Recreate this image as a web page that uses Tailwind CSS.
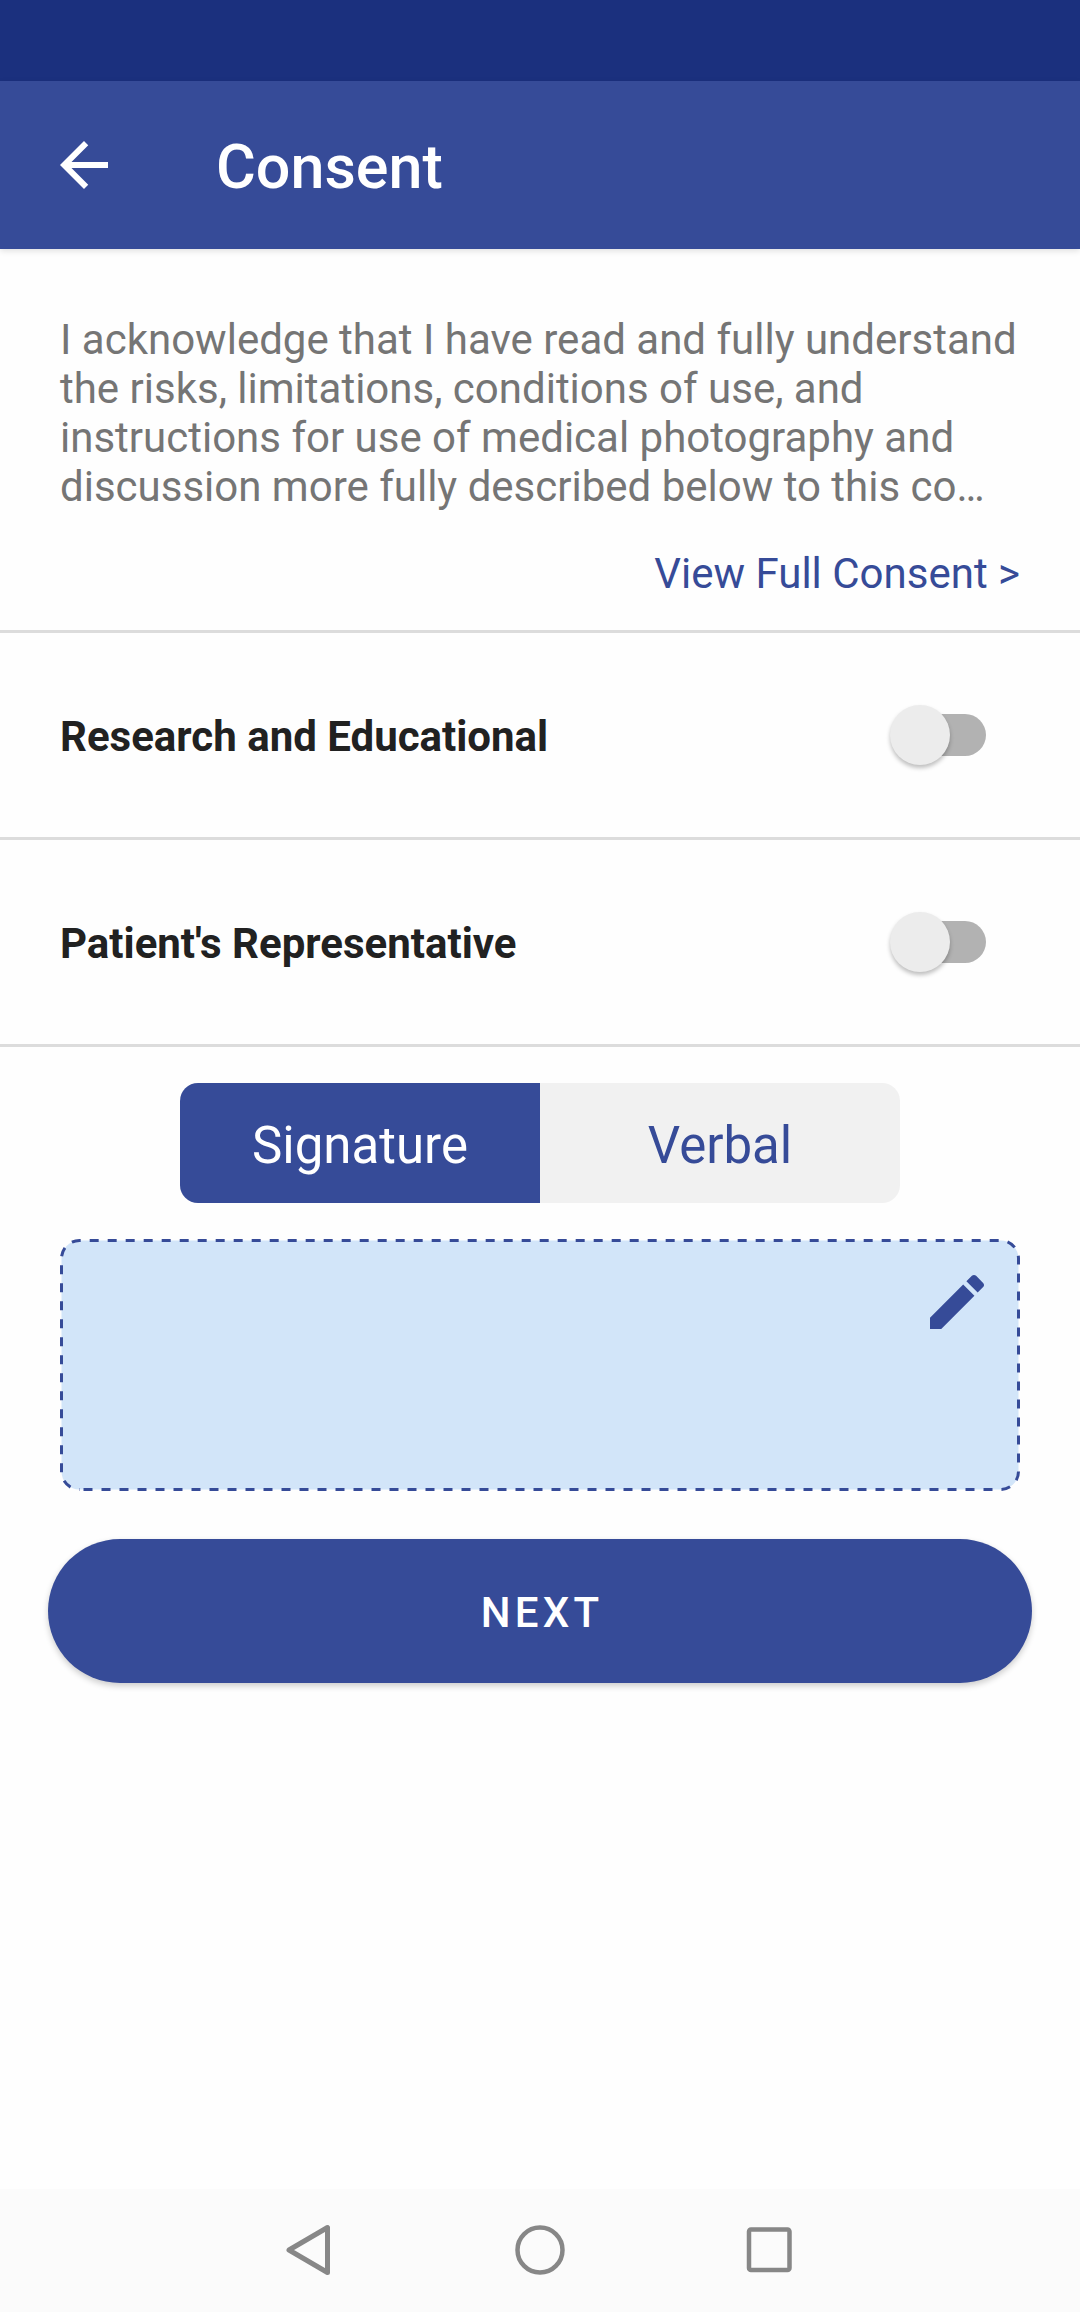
<!DOCTYPE html>
<html lang="en">
  <head>
    <meta charset="UTF-8" />
    <meta name="viewport" content="width=device-width, initial-scale=1.0" />
    <title>Consent</title>
    <script src="https://cdn.jsdelivr.net/npm/@tailwindcss/browser@4"></script>
  </head>
  <body
    class="flex flex-col min-h-screen bg-[#fefefe] text-[42px] leading-[49px] text-[#212121] font-[Roboto,sans-serif]"
  >
    <!-- Status bar -->
    <div class="h-[81px] bg-[#1b307e]"></div>

    <header
      class="flex items-center gap-[96px] h-[168px] px-12 bg-[#364b98] text-white shadow-[0_2px_6px_rgba(0,0,0,0.12)]"
    >
      <button type="button" aria-label="Back">
        <svg class="size-[72px]" viewBox="0 0 24 24" fill="currentColor">
          <path
            d="M20 11H7.83l5.59-5.59L12 4l-8 8 8 8 1.41-1.41L7.83 13H20v-2z"
          />
        </svg>
      </button>
      <h1 class="pt-1 text-[61px] leading-[72px] font-medium">Consent</h1>
    </header>

    <main class="flex-1">
      <section
        class="flex flex-col gap-[38px] px-[60px] pt-[66px] pb-8 border-b-3 border-[#dcdcdc]"
      >
        <p class="text-[#757575]">
          I acknowledge that I have read and fully understand the risks,
          limitations, conditions of use, and instructions for use of medical
          photography and discussion more fully described below to this co…
        </p>
        <a href="#full-consent" class="self-end text-[#364b98]"
          >View Full Consent &gt;</a
        >
      </section>

      <form>
        <div
          class="flex justify-between items-center h-[207px] pl-[60px] pr-[94px] border-b-3 border-[#dcdcdc]"
        >
          <label class="pt-0.5 font-bold" for="research"
            >Research and Educational</label
          >
          <div class="relative flex items-center w-24 h-[60px]">
            <input
              id="research"
              type="checkbox"
              role="switch"
              class="peer appearance-none ml-1 w-full h-[42px] rounded-full bg-[#b2b2b2] checked:bg-[#9aa5cb]"
            />
            <span
              class="absolute left-0 size-[60px] rounded-full bg-[#ececec] shadow-[0_3px_4px_rgba(0,0,0,0.25)] pointer-events-none peer-checked:left-9 peer-checked:bg-[#364b98]"
            ></span>
          </div>
        </div>
        <div
          class="flex justify-between items-center h-[207px] pl-[60px] pr-[94px] border-b-3 border-[#dcdcdc]"
        >
          <label class="pt-0.5 font-bold" for="representative"
            >Patient's Representative</label
          >
          <div class="relative flex items-center w-24 h-[60px]">
            <input
              id="representative"
              type="checkbox"
              role="switch"
              class="peer appearance-none ml-1 w-full h-[42px] rounded-full bg-[#b2b2b2] checked:bg-[#9aa5cb]"
            />
            <span
              class="absolute left-0 size-[60px] rounded-full bg-[#ececec] shadow-[0_3px_4px_rgba(0,0,0,0.25)] pointer-events-none peer-checked:left-9 peer-checked:bg-[#364b98]"
            ></span>
          </div>
        </div>

        <div class="px-12 pt-9">
          <div
            class="grid grid-cols-2 w-[720px] max-w-full h-[120px] mx-auto rounded-[18px] overflow-hidden text-[51px] leading-[60px]"
          >
            <button type="button" class="bg-[#364b98] text-white pt-1.5">
              Signature
            </button>
            <button type="button" class="bg-[#f1f1f1] text-[#364b98] pt-1.5">
              Verbal
            </button>
          </div>

          <!-- Signature pad -->
          <div
            class="relative flex justify-end items-start h-[252px] mx-3 mt-9 mb-12 p-[27px]"
          >
            <svg class="absolute inset-0 size-full -scale-y-100">
              <rect
                x="1.5"
                y="1.5"
                rx="18"
                class="w-[calc(100%-3px)] h-[calc(100%-3px)] fill-[#d2e5f9] stroke-[#364b98]"
                stroke-width="3"
                stroke-dasharray="9 9"
                stroke-dashoffset="14"
              />
            </svg>
            <button
              type="button"
              aria-label="Edit signature"
              class="relative text-[#364b98]"
            >
              <svg class="size-[72px]" viewBox="0 0 24 24" fill="currentColor">
                <path
                  d="M3 17.25V21h3.75L17.81 9.94l-3.75-3.75L3 17.25zM20.71 7.04c.39-.39.39-1.02 0-1.41l-2.34-2.34c-.39-.39-1.02-.39-1.41 0l-1.83 1.83 3.75 3.75 1.83-1.83z"
                />
              </svg>
            </button>
          </div>

          <button
            type="submit"
            class="w-full h-36 pt-0.5 pl-1 rounded-full bg-[#364b98] text-white font-medium tracking-widest shadow-[0_3px_6px_rgba(0,0,0,0.2)]"
          >
            NEXT
          </button>
        </div>
      </form>
    </main>

    <!-- System navigation -->
    <nav class="h-[123px] bg-[#fbfbfb]">
      <div
        class="grid grid-cols-3 justify-items-center items-center w-7/11 h-full mx-auto"
      >
        <button type="button" aria-label="System back">
          <svg
            class="size-[72px]"
            viewBox="0 0 72 72"
            fill="none"
            stroke="#878787"
            stroke-width="5"
            stroke-linejoin="round"
          >
            <path d="M52.5 12.5v45L14 35z" />
          </svg>
        </button>
        <button type="button" aria-label="Home">
          <svg
            class="size-[72px]"
            viewBox="0 0 72 72"
            fill="none"
            stroke="#878787"
            stroke-width="4.5"
          >
            <circle cx="36" cy="35" r="22.5" />
          </svg>
        </button>
        <button type="button" aria-label="Recent apps">
          <svg
            class="size-[72px]"
            viewBox="0 0 72 72"
            fill="none"
            stroke="#878787"
            stroke-width="4.5"
          >
            <rect x="16" y="14.5" width="40.5" height="40.5" rx="2" />
          </svg>
        </button>
      </div>
    </nav>
  </body>
</html>
